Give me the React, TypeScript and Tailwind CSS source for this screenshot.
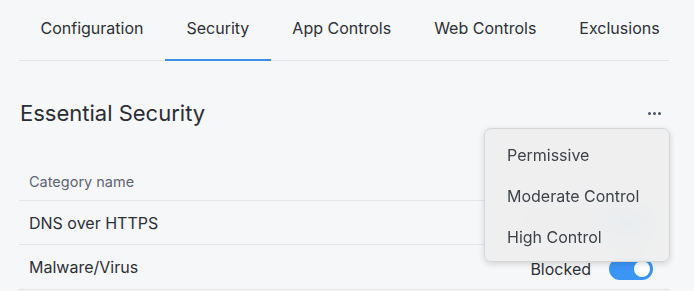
import React from "react";

function Toggle() {
  return (
    <div className="w-[44px] h-[22px] rounded-full bg-[#3b95f5] relative shrink-0">
      <div className="absolute right-[3px] top-[3px] w-[16px] h-[16px] rounded-full bg-white" />
    </div>
  );
}

export default function App() {
  const tabs = ["Configuration", "Security", "App Controls", "Web Controls", "Exclusions"];
  return (
    <div
      className="w-[694px] h-[291px] bg-[#f6f7f9] overflow-hidden relative text-[#2d3036]"
      style={{ fontFamily: "Inter, 'Noto Sans', sans-serif" }}
    >
      <div className="ml-[19px] w-[650px] flex border-b border-[#e3e5e8]">
        {tabs.map((t) => (
          <div
            key={t}
            className={
              "h-[61px] px-[21.5px] shrink-0 whitespace-nowrap flex items-center pb-[4px] text-[16px] -mb-px " +
              (t === "Security" ? "border-b-2 border-[#3b8ee8]" : "border-b-2 border-transparent")
            }
          >
            {t}
          </div>
        ))}
      </div>
      <div className="ml-[19px] w-[650px]">
        <div className="flex items-center justify-between h-[50px] mt-[27px]">
          <div className="text-[22px] text-[#2b2e33] pl-px">Essential Security</div>
          <div className="flex gap-[2px] mr-[8px]">
            <span className="w-[3px] h-[3px] rounded-full bg-[#4b5563]" />
            <span className="w-[3px] h-[3px] rounded-full bg-[#4b5563]" />
            <span className="w-[3px] h-[3px] rounded-full bg-[#4b5563]" />
          </div>
        </div>
        <div className="mt-[17px] h-[46px] pt-[8px] flex items-center px-[10px] border-b border-[#e3e5e8] text-[14.5px] text-[#5f6570]">
          Category name
        </div>
        <div className="h-[44px] flex items-center justify-between px-[10px] pr-[16px] border-b border-[#e3e5e8] text-[16px]">
          <span>DNS over HTTPS</span>
          <div className="flex items-center gap-[18px]">
            <span>Blocked</span>
            <Toggle />
          </div>
        </div>
        <div className="h-[45px] flex items-center justify-between px-[10px] pr-[16px] border-b border-[#e3e5e8] text-[16px]">
          <span>Malware/Virus</span>
          <div className="flex items-center gap-[18px] pt-[4px]">
            <span>Blocked</span>
            <Toggle />
          </div>
        </div>
      </div>
      <div className="absolute left-[484px] top-[128px] w-[186px] h-[134px] rounded-[7px] border border-[#d6d6d6] bg-[#eeeeee]/95 backdrop-blur-md shadow-[0_2px_6px_rgba(0,0,0,0.15)] py-[5px] text-[16px] text-[#3e4249]">
        <div className="h-[41px] flex items-center pl-[22px]">Permissive</div>
        <div className="h-[41px] flex items-center pl-[22px]">Moderate Control</div>
        <div className="h-[41px] flex items-center pl-[22px]">High Control</div>
      </div>
    </div>
  );
}
